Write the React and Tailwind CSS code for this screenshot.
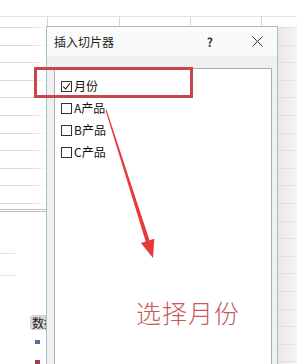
import React from "react";

const rows = Array.from({ length: 19 });

function Item({ label, checked }) {
  return (
    <div className="flex items-center h-[22px] pl-[6px] gap-[2px]">
      <div className="w-[11px] h-[11px] border border-[#333] bg-white flex items-center justify-center">
        {checked && (
          <svg width="9" height="9" viewBox="0 0 9 9">
            <path d="M1.2 4.6 L3.6 7 L8 1.3" fill="none" stroke="#222" strokeWidth="1.1" />
          </svg>
        )}
      </div>
      <span className="text-[12px] leading-none text-[#111]">{label}</span>
    </div>
  );
}

export default function App() {
  return (
    <div className="relative w-[297px] h-[364px] overflow-hidden bg-white font-['Noto_Sans_CJK_SC','Noto_Sans',sans-serif]">
      {/* spreadsheet background */}
      <div className="flex flex-col pt-[16px]">
        <div className="flex h-[11px] border-t border-[#e4e4e4]">
          <div className="w-[48px] border-r border-[#d4d4d4]" />
          <div className="w-[72px] border-r border-[#d4d4d4]" />
          <div className="w-[71px] border-r border-[#d4d4d4]" />
          <div className="w-[71px] border-r border-[#d4d4d4]" />
          <div className="flex-1" />
        </div>
        <div className="border-t border-[#d8d8d8]" />
        {rows.map((_, i) => (
          <div key={i} className="h-[17.6px] border-b border-[#d8d8d8]" />
        ))}
      </div>

      {/* chart object at lower left */}
      <div className="absolute left-0 top-[209px] w-[70px] bottom-0 bg-white border-t-[3px] border-double border-[#c0c0c0] flex flex-col items-start">
        <div className="mt-[41px] w-[15px] border-t border-[#e2e2e2]" />
        <div className="mt-[21px] w-[15px] border-t border-[#e2e2e2]" />
        <div className="ml-[30px] mt-[39px] w-[22px] h-[15px] rounded-[3px] bg-[#d6d6d6] text-[12px] leading-[15px] text-[#222] pl-[2px] whitespace-nowrap">数据</div>
        <div className="ml-[35px] mt-[10px] w-[5px] h-[5px] bg-[#4e71a6]" />
        <div className="ml-[35px] mt-[16px] w-[5px] h-[5px] bg-[#a0404c]" />
      </div>

      {/* shadows beside dialog */}
      <div className="absolute left-[30px] top-[27px] w-[16px] h-[182px] bg-gradient-to-r from-transparent to-white/90" />
      <div className="absolute left-[278px] top-[27px] w-[19px] bottom-0 bg-gradient-to-r from-[#dedede]/70 to-[#f4ecec]/60" />

      {/* dialog */}
      <div className="absolute left-[46px] top-[26px] w-[232px] h-[400px] border border-[#9ec3c7] bg-[#f0f0f0] flex flex-col">
        <div className="h-[29px] bg-[#fafafa] flex items-center pl-[7px] pr-[14px]">
          <span className="text-[12px] text-[#222] flex-1">插入切片器</span>
          <span className="text-[12px] font-bold text-[#333] mr-[39px]">?</span>
          <svg width="11" height="11" viewBox="0 0 11 11">
            <path d="M0.5 0.5 L10.5 10.5 M10.5 0.5 L0.5 10.5" stroke="#333" strokeWidth="1" />
          </svg>
        </div>
        <div className="flex-1 pt-[12px] pl-[7px] pr-[5px]">
          <div className="h-full bg-white border border-[#adadad] pt-[6px]">
            <Item label="月份" checked />
            <Item label="A产品" />
            <Item label="B产品" />
            <Item label="C产品" />
          </div>
        </div>
      </div>

      {/* red highlight rectangle */}
      <div className="absolute left-[34px] top-[67px] w-[159px] h-[31px] border-[3px] border-[#c8454b]" />

      {/* arrow */}
      <svg className="absolute left-0 top-0" width="297" height="364" viewBox="0 0 297 364">
        <polygon
          points="105.5,110.2 106.5,109.8 149.5,240.2 154.3,238.7 153,258 140.9,242.9 145.7,241.4"
          fill="#e53a3c"
        />
      </svg>

      {/* annotation */}
      <div className="absolute left-[136px] top-[297px] text-[25px] leading-[30px] font-light tracking-[1px] text-[#c7585d]">
        选择月份
      </div>
    </div>
  );
}
